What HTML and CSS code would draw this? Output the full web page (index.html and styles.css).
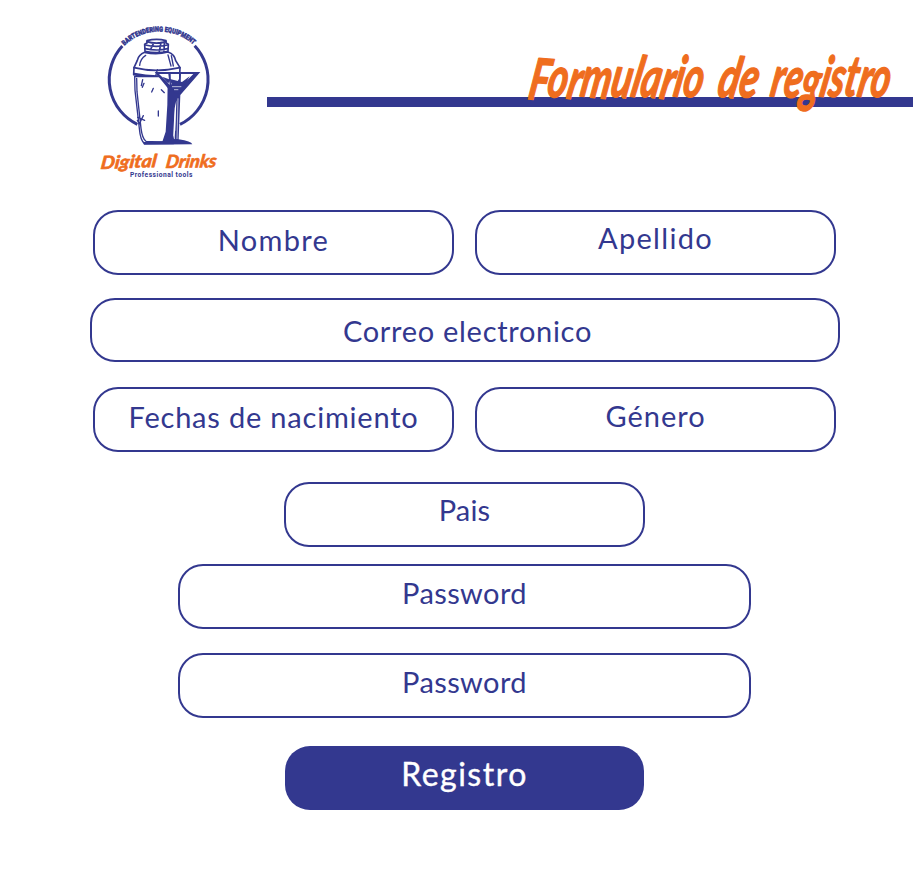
FILE: index.html
```html
<!DOCTYPE html>
<html lang="es">
<head>
<meta charset="utf-8">
<title>Formulario de registro</title>
<link rel="stylesheet" href="styles.css">
</head>
<body>
<header class="header">
  <svg class="logo" width="140" height="170" viewBox="0 0 420 510" role="img" aria-label="Digital Drinks">
    <defs><path id="arc" d="M103 92A151 151 0 0 1 310 89"/></defs>
    <g fill="none" stroke="#33388f" stroke-linecap="round" stroke-linejoin="round">
      <path stroke-width="9" stroke-linecap="butt" d="M97 93A149 149 0 0 0 142 328M314 92A149 149 0 0 1 270 328"/>
      <path stroke-width="5" fill="#fff" d="M165 109L164 88L171 84V77Q200 69 228 77V84L235 88L234 109Q200 117 165 109Z"/>
      <path stroke-width="5" d="M171 80Q199 89 228 80M166 90Q198 98 233 90M166 101Q199 109 233 101M213 82L208 109M190 86L183 101M223 84L222 110"/>
      <path stroke-width="5" fill="#fff" d="M164 112Q146 119 142 136L132 158L131 179Q195 193 269 179L270 158L257 137Q254 118 234 111Q200 120 164 112Z"/>
      <path stroke-width="5" d="M132 158Q198 174 270 158M133 176Q200 190 269 176"/>
      <path stroke-width="4" d="M167 121Q151 131 149 151M244 122L250 153M234 120L243 153M202 164L197 183"/>
      <path stroke-width="4" fill="#fff" d="M134 184L135 226L148 340Q151 377 164 386H250V185Z"/>
      <path stroke-width="4" d="M140 190L141 230L153 340Q157 371 168 379L240 382M158 194L154 212M162 205L157 217M190 220L185 231M214 224L223 233M143 307L164 316M150 322L160 302M205 288V303M142 316L152 331"/>
    </g>
    <g fill="#33388f">
      <path d="M233 203L265 224L255 285L248 386H215L227 350L232 269Z"/>
      <path d="M194 171H331L271 240L266 373Q304 379 307 388L162 389L158 381L229 378L254 372L258 250Z"/>
      <path fill="#fff" d="M207 177H235L239 210L230 199ZM242 177H267V192L257 208H243Z"/>
      <path fill="#fff" d="M273 177H310L290 197L272 207ZM259 256L256 346L249 372L254 280Z"/>
      <path d="M240 192L276 201L299 184L270 235H253ZM217 185L235 205L241 194Z"/>
    </g>
    <path d="M264 250L261 372M246 215H274M252 224H265" fill="none" stroke="#fff" stroke-width="2"/>
    <text class="logo-arc"><textPath href="#arc" textLength="228" lengthAdjust="spacingAndGlyphs">BARTENDERING EQUIPMENT</textPath></text>
    <g class="logo-name">
      <text transform="translate(31 462) skewX(-9) rotate(-2)" textLength="166" lengthAdjust="spacingAndGlyphs">Digital</text>
      <text transform="translate(226 459) skewX(-9) rotate(-1)" textLength="151" lengthAdjust="spacingAndGlyphs">Drinks</text>
    </g>
    <text class="logo-tag" x="120" y="485" textLength="187">Professional tools</text>
  </svg>
  <div class="banner">
    <div class="bar"></div>
    <svg class="title" width="403" height="100" viewBox="0 0 403 100">
      <text transform="translate(17 57) skewX(-8)" rotate="3 5 7 4 5 7 5 7 5 4" dy="2 -3 2 -2 0 0 0 2 -2 0" textLength="174" lengthAdjust="spacingAndGlyphs">Formulario</text>
      <text transform="translate(206 56) skewX(-8)" rotate="5" textLength="40" lengthAdjust="spacingAndGlyphs">de</text>
      <text transform="translate(259 56) skewX(-8)" rotate="4 6 4 6 4 5 6 4" dy="0 0 4 -4 0 -1 1 0" textLength="119" lengthAdjust="spacingAndGlyphs">registro</text>
    </svg>
  </div>
</header>
<main class="form">
  <div class="row pair first">
    <div class="field nombre"><span>Nombre</span></div>
    <div class="field apellido"><span>Apellido</span></div>
  </div>
  <div class="row second"><div class="field wide correo"><span>Correo electronico</span></div></div>
  <div class="row pair third">
    <div class="field fecha"><span>Fechas de nacimiento</span></div>
    <div class="field genero"><span>Género</span></div>
  </div>
  <div class="row fourth"><div class="field pais"><span>Pais</span></div></div>
  <div class="row fifth"><div class="field medium password"><span>Password</span></div></div>
  <div class="row sixth"><div class="field medium password"><span>Password</span></div></div>
  <div class="row last"><button class="submit" type="button">Registro</button></div>
</main>
</body>
</html>
```
FILE: styles.css
```css
* { box-sizing: border-box; }
body {
  margin: 0;
  height: 878px;
  overflow: hidden;
  background: #fff;
  color: #33388f;
  font-family: Lato, "Liberation Sans", sans-serif;
}
.header { display: flex; height: 210px; padding: 15px 0 0 90px; }
.logo { flex: none; }
.banner { position: relative; flex: 1; margin-left: 37px; padding-top: 82px; }
.bar { height: 10px; background: #33388f; }
.title { position: absolute; right: 0; top: 25px; overflow: visible; }
.title text {
  font: italic 700 57px "Lato", sans-serif;
  fill: #ef6d1e;
  stroke: #ef6d1e;
  stroke-width: 1.5;
  stroke-linejoin: round;
}
.logo-arc { font: 900 21px "Roboto", sans-serif; fill: #33388f; stroke: #33388f; stroke-width: 1.5; }
.logo-name { font: italic 700 54px "Lato", sans-serif; fill: #ef6d1e; stroke: #ef6d1e; stroke-width: 2; stroke-linejoin: round; }
.logo-tag { font: 700 20px "Roboto", sans-serif; fill: #33388f; }
.form { display: flex; flex-direction: column; padding-left: 16px; }
.row { display: flex; justify-content: center; width: 897px; }
.pair { gap: 21px; }
.second { margin-top: 23px; }
.third { margin-top: 25px; }
.fourth { margin-top: 30px; }
.fifth { margin-top: 17px; }
.sixth { margin-top: 24px; }
.last { margin-top: 28px; }
.field {
  display: flex;
  justify-content: center;
  width: 361px;
  height: 65px;
  border: 2px solid #33388f;
  border-radius: 25px;
  font-size: 29px;
  line-height: 36px;
  letter-spacing: 1px;
}
.wide { width: 750px; height: 64px; }
.medium { width: 573px; }
.nombre { padding-top: 10px; letter-spacing: 1.3px; }
.apellido { padding-top: 8px; letter-spacing: 1.3px; }
.correo { padding: 13px 0 0 6px; letter-spacing: 0.7px; }
.fecha { padding-top: 10px; letter-spacing: 0.8px; }
.genero { padding-top: 9px; }
.pais { padding-top: 8px; letter-spacing: 0.2px; }
.password { padding-top: 9px; letter-spacing: 0.4px; }
.submit {
  width: 359px;
  height: 64px;
  padding: 0 0 10px;
  border: 0;
  border-radius: 25px;
  background: #33388f;
  color: #fff;
  font: 400 32px Lato, sans-serif;
  letter-spacing: 1.5px;
  -webkit-text-stroke: 0.4px #fff;
}
```
